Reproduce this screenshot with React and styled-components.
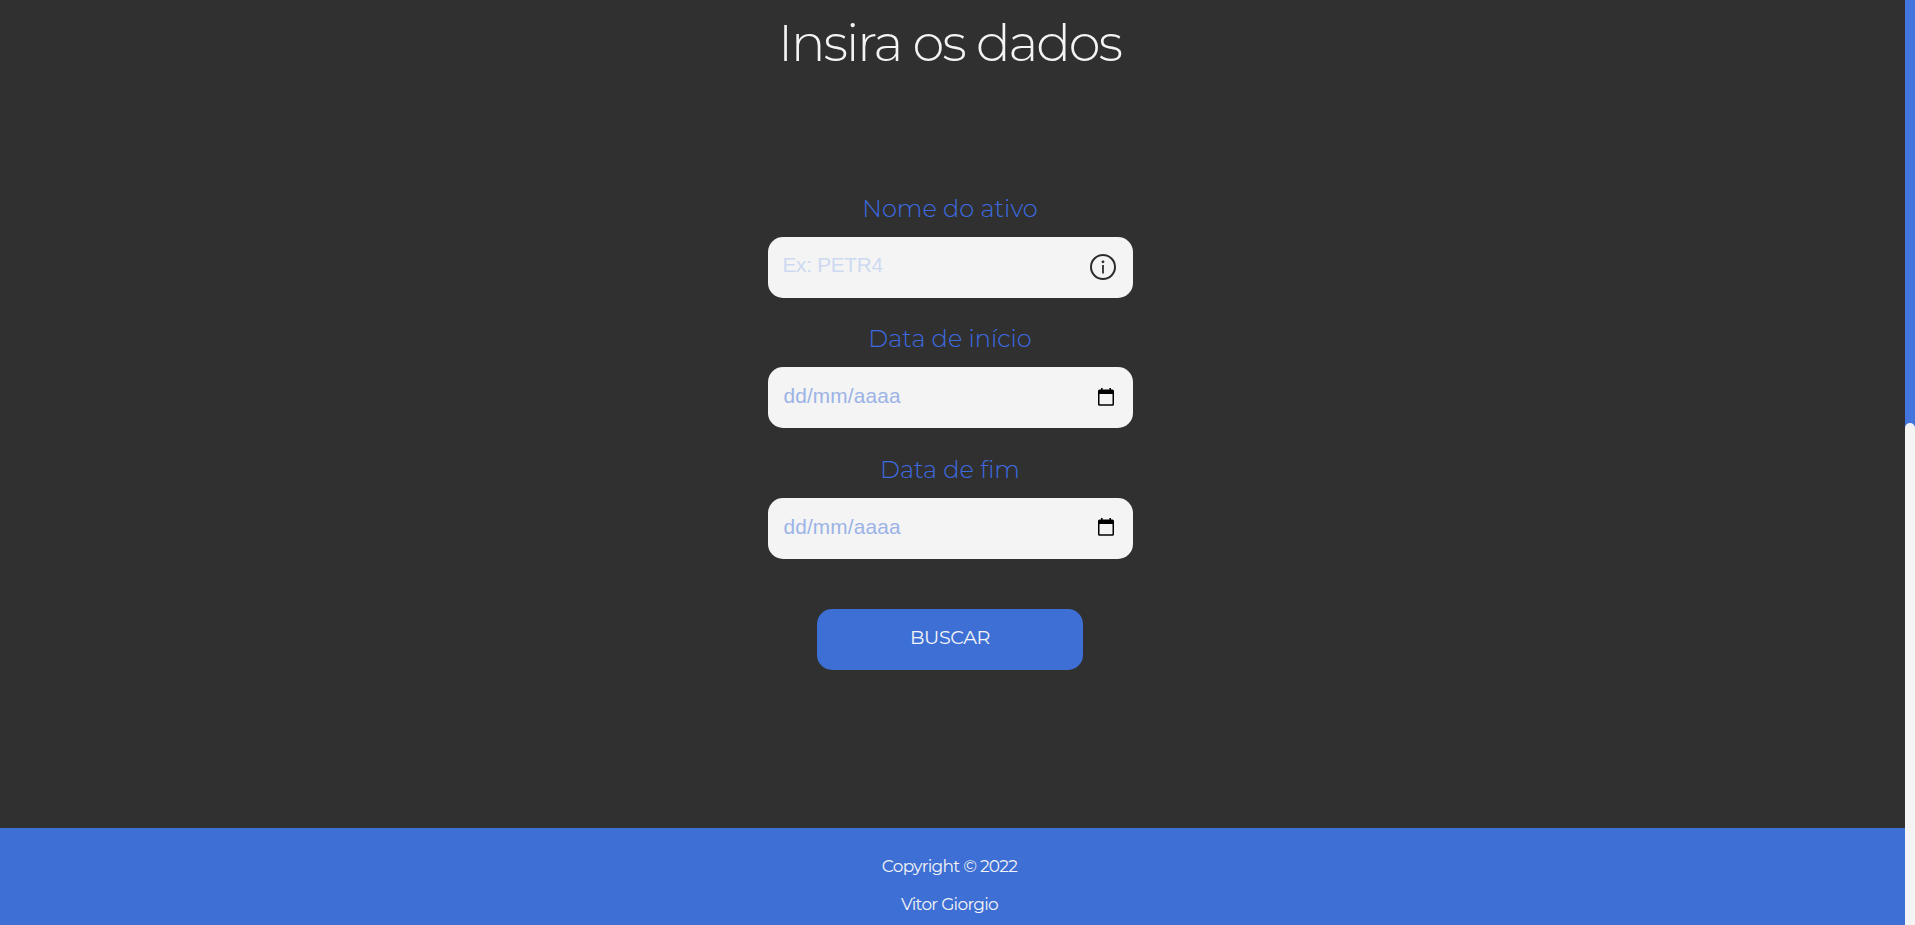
import React from 'react';
import styled, { createGlobalStyle } from 'styled-components';

const GlobalStyle = createGlobalStyle`
  * { box-sizing: border-box; margin: 0; padding: 0; }
  body { background: #303030; overflow: hidden; font-family: Montserrat, "Open Sans", sans-serif; }
`;

const Page = styled.div`
  display: flex;
  height: 925px;
`;

const Content = styled.div`
  flex: 1;
  display: flex;
  flex-direction: column;
`;

const Main = styled.main`
  flex: 1;
  display: flex;
  flex-direction: column;
  align-items: center;
  padding: 12px 5px 0 0;
`;

const Title = styled.h1`
  color: #f4f4f4;
  font-size: 51.2px;
  font-weight: 300;
  letter-spacing: -2px;
  line-height: 62px;
  margin: 0 1px 120px 0;
`;

const Form = styled.form`
  display: flex;
  flex-direction: column;
  align-items: center;
`;

const Field = styled.div`
  display: flex;
  flex-direction: column;
  align-items: center;
  width: 365px;
  margin-bottom: ${(p) => (p.$last ? 50.4 : 26.9)}px;
`;

const Label = styled.label`
  color: #3d6be0;
  font-size: 24.1px;
  font-weight: 300;
  line-height: 30px;
  margin-bottom: 12.6px;
`;

const InputBox = styled.div`
  display: flex;
  align-items: center;
  justify-content: space-between;
  width: 100%;
  height: 61px;
  padding: 0 16.5px 0 15px;
  border-radius: 15px;
  background: #f4f4f4;
`;

const Input = styled.input`
  flex: 1;
  min-width: 0;
  border: 0;
  outline: 0;
  background: transparent;
  color: #3d6fd5;
  font-family: "Liberation Sans", Arial, sans-serif;
  font-size: 20.8px;
  padding: 0 0 ${(p) => (p.$date ? 3 : 4)}px ${(p) => (p.$date ? 1 : 0)}px;
  letter-spacing: ${(p) => (p.$date ? 0.15 : -0.3)}px;
  &::placeholder {
    color: ${(p) => (p.$date ? '#9bb3e6' : '#cddaf1')};
    opacity: 1;
  }
`;

const CalendarSvg = styled.svg`
  flex: none;
  margin: 0 2px 1.5px 0;
`;

const Button = styled.button`
  width: 266px;
  height: 61px;
  border: 0;
  border-radius: 15px;
  background: #3d6fd5;
  color: #f4f4f4;
  font-family: inherit;
  font-size: 19.2px;
  letter-spacing: -0.4px;
  padding-bottom: 4px;
`;

const Footer = styled.footer`
  display: flex;
  flex-direction: column;
  align-items: center;
  gap: 16px;
  height: 97px;
  padding: 27px 6px 0 0;
  background: #3d6fd5;
`;

const FooterText = styled.p`
  color: #f4f4f4;
  font-size: 17px;
  line-height: 22px;
  letter-spacing: -0.72px;
`;

const ScrollTrack = styled.div`
  width: 10px;
  padding-top: 423px;
  background: #4474dd;
`;

const ScrollThumb = styled.div`
  height: 502px;
  border-radius: 5px 5px 0 0;
  background: #f4f4f4;
`;

const InfoIcon = () => (
  <svg width="26" height="26" viewBox="0 0 26 26" fill="none">
    <circle cx="13" cy="13" r="12" stroke="#2c2c2c" strokeWidth="2" />
    <circle cx="13" cy="7.8" r="1.4" fill="#2c2c2c" />
    <path d="M13 11v8.5" stroke="#2c2c2c" strokeWidth="1.8" />
  </svg>
);

const CalendarIcon = () => (
  <CalendarSvg width="16" height="18" viewBox="0 0 16 18">
    <path
      fill="#000"
      fillRule="evenodd"
      d="M3 0h1.6v1.4h6.8V0H13v1.4h1.4A1.6 1.6 0 0 1 16 3v13.2a1.6 1.6 0 0 1-1.6 1.6H1.6A1.6 1.6 0 0 1 0 16.2V3a1.6 1.6 0 0 1 1.6-1.6H3zM1.5 6v10.3h13V6z"
    />
  </CalendarSvg>
);

export default function App() {
  return (
    <Page>
      <GlobalStyle />
      <Content>
        <Main>
          <Title>Insira os dados</Title>
          <Form>
            <Field>
              <Label htmlFor="ativo">Nome do ativo</Label>
              <InputBox>
                <Input id="ativo" placeholder="Ex: PETR4" />
                <InfoIcon />
              </InputBox>
            </Field>
            <Field>
              <Label htmlFor="inicio">Data de início</Label>
              <InputBox>
                <Input id="inicio" $date placeholder="dd/mm/aaaa" />
                <CalendarIcon />
              </InputBox>
            </Field>
            <Field $last>
              <Label htmlFor="fim">Data de fim</Label>
              <InputBox>
                <Input id="fim" $date placeholder="dd/mm/aaaa" />
                <CalendarIcon />
              </InputBox>
            </Field>
            <Button type="button">BUSCAR</Button>
          </Form>
        </Main>
        <Footer>
          <FooterText>Copyright © 2022</FooterText>
          <FooterText>Vitor Giorgio</FooterText>
        </Footer>
      </Content>
      <ScrollTrack>
        <ScrollThumb />
      </ScrollTrack>
    </Page>
  );
}
